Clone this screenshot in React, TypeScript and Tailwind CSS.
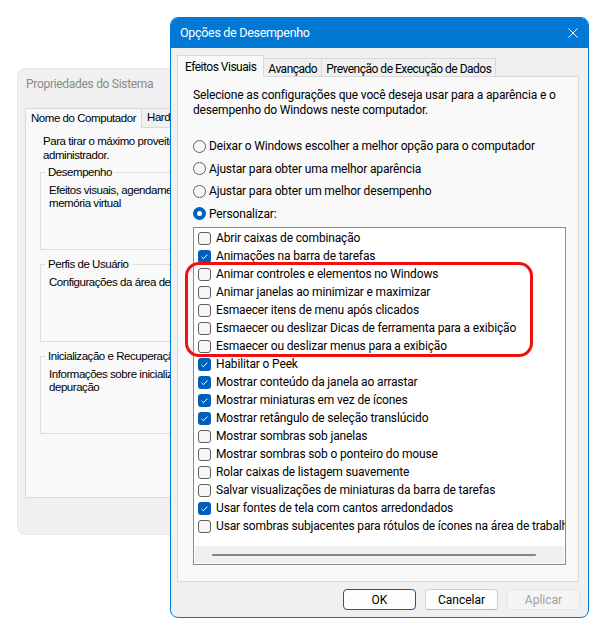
const SEGOE = "font-['Roboto','Noto_Sans',sans-serif]"

const EFFECTS: [string, boolean][] = [
  ["Abrir caixas de combinação", false],
  ["Animações na barra de tarefas", true],
  ["Animar controles e elementos no Windows", false],
  ["Animar janelas ao minimizar e maximizar", false],
  ["Esmaecer itens de menu após clicados", false],
  ["Esmaecer ou deslizar Dicas de ferramenta para a exibição", false],
  ["Esmaecer ou deslizar menus para a exibição", false],
  ["Habilitar o Peek", true],
  ["Mostrar conteúdo da janela ao arrastar", true],
  ["Mostrar miniaturas em vez de ícones", true],
  ["Mostrar retângulo de seleção translúcido", true],
  ["Mostrar sombras sob janelas", false],
  ["Mostrar sombras sob o ponteiro do mouse", false],
  ["Rolar caixas de listagem suavemente", false],
  ["Salvar visualizações de miniaturas da barra de tarefas", false],
  ["Usar fontes de tela com cantos arredondados", true],
  ["Usar sombras subjacentes para rótulos de ícones na área de trabalho", false],
]

const RADIOS = [
  "Deixar o Windows escolher a melhor opção para o computador",
  "Ajustar para obter uma melhor aparência",
  "Ajustar para obter um melhor desempenho",
  "Personalizar:",
]

function Checkbox({ checked }: { checked: boolean }) {
  if (checked) {
    return (
      <span className="w-[13px] h-[13px] rounded-[3px] bg-[#005fb8] flex items-center justify-center shrink-0">
        <svg width="13" height="13" viewBox="0 0 13 13">
          <path d="M3.6 6.9 L5.5 8.7 L9.4 4.6" fill="none" stroke="#fff" strokeWidth="1" />
        </svg>
      </span>
    )
  }
  return <span className="w-[13px] h-[13px] rounded-[3px] border border-[#5f5f5f] bg-[#f6f6f6] shrink-0" />
}

function Radio({ checked }: { checked: boolean }) {
  if (checked) {
    return (
      <span className="w-[13px] h-[13px] rounded-full bg-[#005fb8] flex items-center justify-center shrink-0">
        <span className="w-[5px] h-[5px] rounded-full bg-white" />
      </span>
    )
  }
  return <span className="w-[13px] h-[13px] rounded-full border border-[#5f5f5f] bg-[#f6f6f6] shrink-0" />
}

function GroupBox({ title, lines, className }: { title: string; lines: string[]; className: string }) {
  return (
    <fieldset className={`ml-[14px] w-[260px] border border-[#dcdcdc] ${className}`}>
      <legend className="ml-[4px] px-[3px] leading-[14px]">{title}</legend>
      <div className="mt-[5px] pl-[8px] leading-[13px] whitespace-nowrap">
        {lines.map(l => <div key={l}>{l}</div>)}
      </div>
    </fieldset>
  )
}

function SystemProperties() {
  return (
    <div className="absolute isolate left-[17px] top-[68px] w-[320px] h-[467px] rounded-lg bg-[#f0f0f0] border border-[#e6e6e6] flex flex-col font-['Liberation_Sans',Arial,sans-serif] text-[11.5px] tracking-[-0.45px] text-black">
      <div className={`h-[30px] flex items-center pl-[8px] text-[12px] tracking-[-0.3px] text-[#8a8a8a] ${SEGOE}`}>
        Propriedades do Sistema
      </div>
      <div className="flex ml-[7px] mt-[9px] relative z-10 -mb-px">
        <div className="h-[20px] px-[5px] flex items-center border border-[#d9d9d9] border-b-0 bg-[#f9f9f9]">
          Nome do Computador
        </div>
        <div className="h-[20px] px-[5px] -ml-px flex items-center border border-[#d9d9d9]">
          Hardware
        </div>
      </div>
      <div className="ml-[7px] h-[371px] bg-[#f9f9f9] border border-[#d9d9d9] pt-[6px]">
        <div className="pl-[17px] leading-[14px] whitespace-nowrap">
          <div>Para tirar o máximo proveito destas alterações, faça logon como</div>
          <div>administrador.</div>
        </div>
        <GroupBox className="mt-[3px] h-[85px]" title="Desempenho" lines={["Efeitos visuais, agendamento do processador, uso de", "memória virtual"]} />
        <GroupBox className="mt-[7px] h-[85px]" title="Perfis de Usuário" lines={["Configurações da área de trabalho relativas à entrada"]} />
        <GroupBox className="mt-[7px] h-[85px]" title="Inicialização e Recuperação" lines={["Informações sobre inicialização do sistema, falha e", "depuração"]} />
      </div>
    </div>
  )
}

function PerformanceOptions() {
  return (
    <div className={`absolute isolate left-[170px] top-[17px] w-[419px] h-[601px] rounded-lg bg-[#f0f0f0] border border-[#0078d4] flex flex-col overflow-hidden text-black ${SEGOE}`}>
      <div className="h-[30px] shrink-0 bg-[#0078d4] flex items-center justify-between pl-[9px] pr-[10px] text-white text-[12.5px] tracking-[-0.3px]">
        <span>Opções de Desempenho</span>
        <svg width="10" height="10" viewBox="0 0 10 10">
          <path d="M0.5 0.5 L9.5 9.5 M9.5 0.5 L0.5 9.5" stroke="#fff" strokeWidth="1" />
        </svg>
      </div>

      <div className="flex items-end ml-[6px] mt-[7px] relative z-10 -mb-px text-[12px] tracking-[-0.5px]">
        <div className="h-[22px] px-[7px] flex items-center border border-[#d9d9d9] border-b-0 bg-[#f9f9f9]">
          Efeitos Visuais
        </div>
        <div className="h-[19px] px-[4px] pt-[2px] flex items-center border border-[#d9d9d9] border-l-0">
          Avançado
        </div>
        <div className="h-[19px] px-[4px] pt-[2px] flex items-center border border-[#d9d9d9] border-l-0">
          Prevenção de Execução de Dados
        </div>
      </div>

      <div className="ml-[6px] mr-[9px] h-[506px] bg-[#f9f9f9] border border-[#d9d9d9] pl-[15px] pt-[11px] text-[12px] tracking-[-0.15px]">
        <p className="leading-[15px] whitespace-nowrap">
          Selecione as configurações que você deseja usar para a aparência e o<br />
          desempenho do Windows neste computador.
        </p>

        <div className="mt-[17px] flex flex-col">
          {RADIOS.map((r, i) => (
            <label key={r} className="h-[22.5px] flex items-center gap-[3px]">
              <Radio checked={i === 3} />
              <span>{r}</span>
            </label>
          ))}
        </div>

        <div className="mt-[2px] w-[373px] h-[338px] border border-[#8a8a8a] bg-white flex flex-col overflow-hidden">
          <div className="pt-px flex-1 overflow-hidden">
            {EFFECTS.map(([t, c]) => (
              <div key={t} className="h-[18px] pl-[4px] flex items-center gap-[5px] whitespace-nowrap">
                <Checkbox checked={c} />
                <span>{t}</span>
              </div>
            ))}
          </div>
          <div className="mx-px mb-px h-[17px] bg-[#f0f0f0] flex items-center pl-[17px]">
            <div className="w-[324px] h-[2px] bg-[#858585] rounded-full" />
          </div>
        </div>
      </div>

      <div className="flex justify-end gap-[9px] mt-[7px] mr-[8px] text-[12px]">
        <button className="w-[73px] h-[21px] rounded-[4px] border border-[#005fb8] bg-[#fdfdfd]">OK</button>
        <button className="w-[73px] h-[21px] rounded-[4px] border border-[#d0d0d0] border-b-[#b8b8b8] bg-[#fdfdfd]">Cancelar</button>
        <button className="w-[73px] h-[21px] rounded-[4px] border border-[#e5e5e5] bg-[#f5f5f5] text-[#a0a0a0]">Aplicar</button>
      </div>
    </div>
  )
}

export default function App() {
  return (
    <div className="relative w-[603px] h-[636px] bg-white overflow-hidden">
      <SystemProperties />
      <PerformanceOptions />
      <div className="absolute left-[185px] top-[262px] w-[348px] h-[95px] rounded-[14px] border-[3px] border-[#f20f0f] pointer-events-none" />
    </div>
  )
}
